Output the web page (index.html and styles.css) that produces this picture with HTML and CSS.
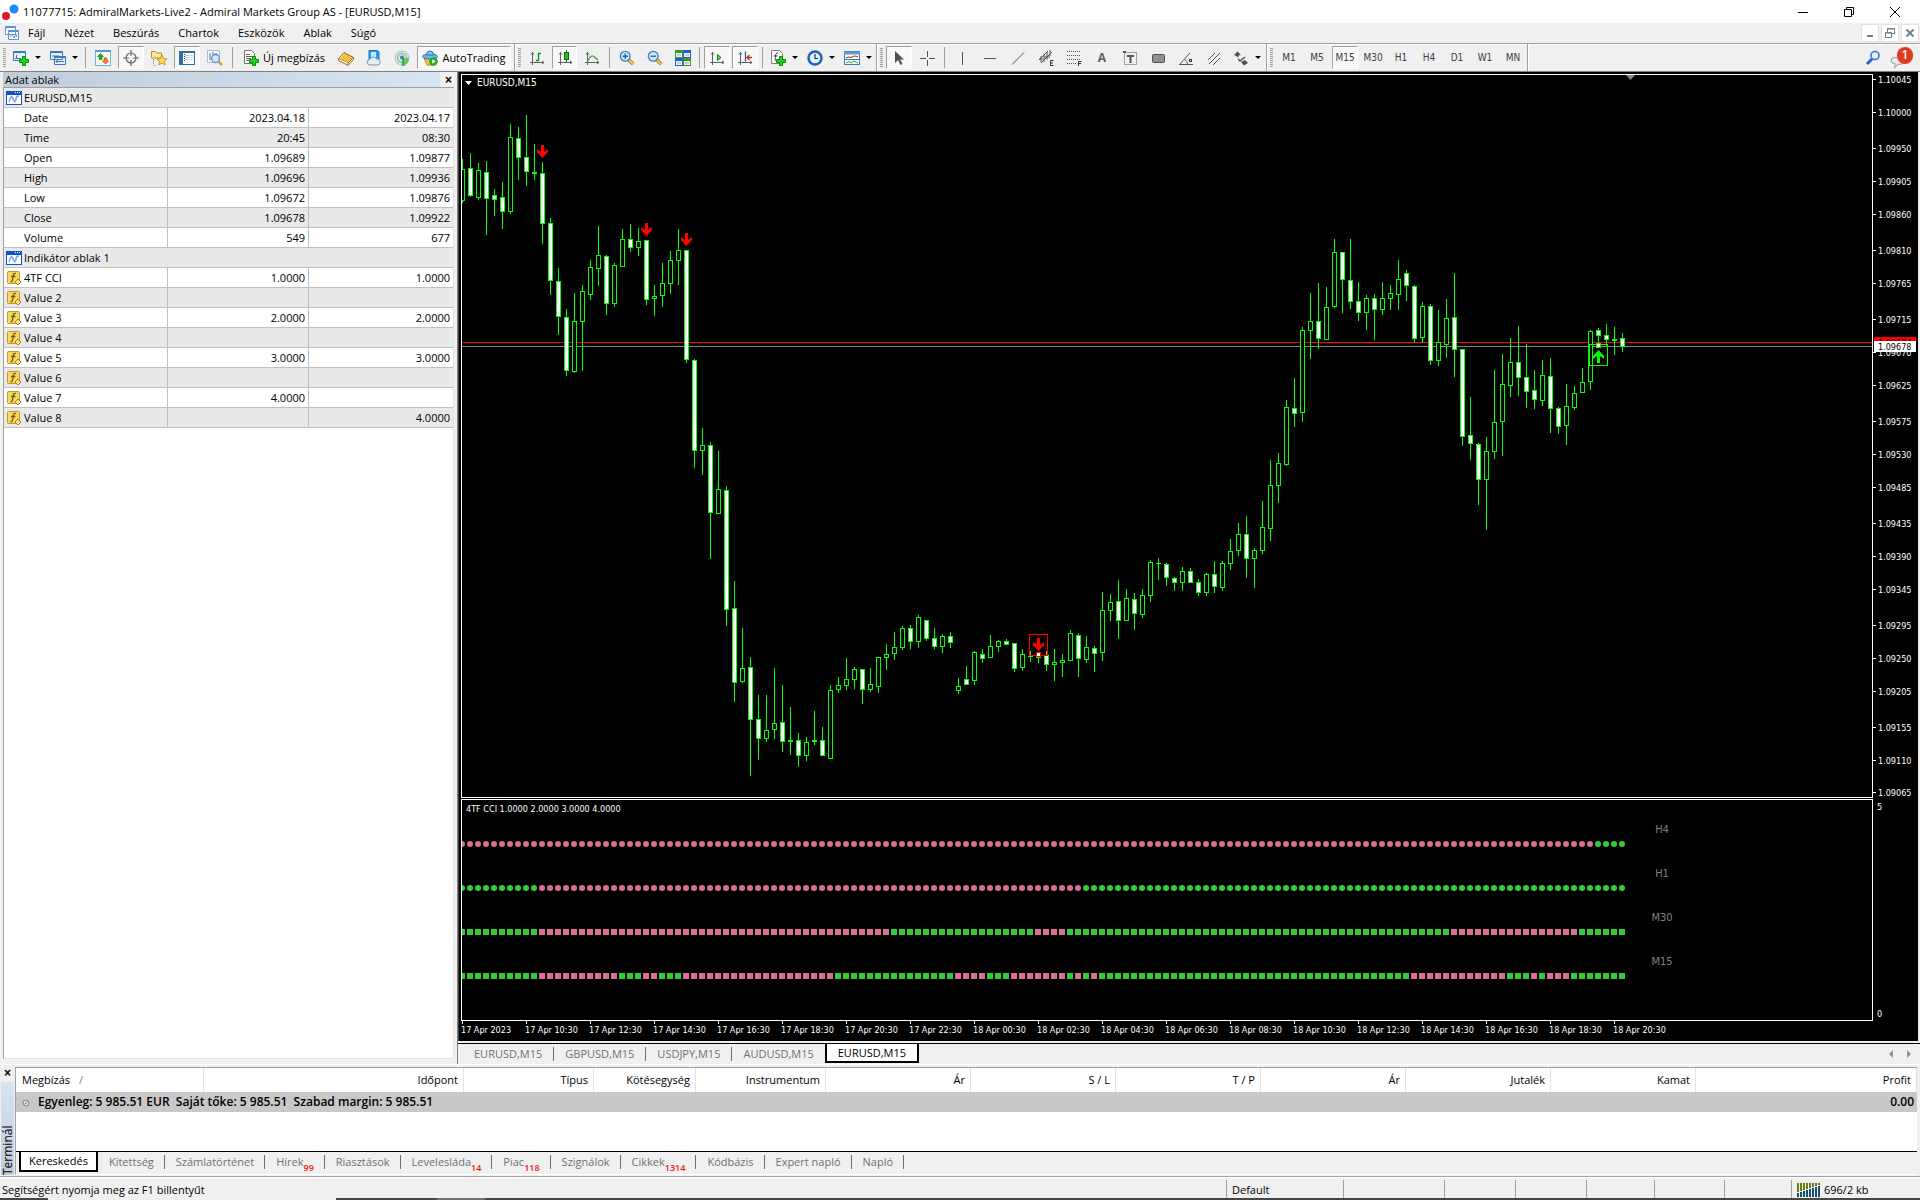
FILE: index.html
```html
<!DOCTYPE html>
<html lang="hu">
<head>
<meta charset="utf-8">
<title>11077715: AdmiralMarkets-Live2 - Admiral Markets Group AS - [EURUSD,M15]</title>
<link rel="stylesheet" href="styles.css">
</head>
<body>
<svg class="defs" aria-hidden="true">
  <symbol id="plus" viewBox="0 0 10 10"><path d="M3.500 .5h3v3h3v3h-3v3h-3v-3h-3v-3h3z" fill="#1fd51f" stroke="#0a8a0a"/></symbol>
  <symbol id="win" viewBox="0 0 16 16"><rect x=".5" y="1.500" width="15" height="13" fill="#fff" stroke="#1450d2"/><rect y="1" width="16" height="4" fill="#1450d2"/><path d="M9 2.500h1m1 0h1m1 0h1" stroke="#fff"/><path d="M3 12c2-7 3-6 4-3s2 4 3 0 1-3 3-3" fill="none" stroke="#7f9fe6" stroke-width="1.500"/></symbol>
  <symbol id="fx" viewBox="0 0 16 16"><rect x="1.500" y="1.500" width="12" height="12" rx="1" fill="#f3d863" stroke="#c79a1c"/><path d="M10 3.500c-2-.7-2.500.5-2.800 2.500L6.500 10c-.3 1.500-1 2-2 1.500M5 6.500h4.500" fill="none" stroke="#7a5a10" stroke-width="1.300"/><path d="M12 9l3 3-3 3-3-3z" fill="#f9e48a" stroke="#a87c10"/></symbol>
  <symbol id="axes" viewBox="0 0 16 16"><path d="M3.500 2v13M1 12.500h14M2 4.500l1.500-2 1.500 2M13 11l2 1.500-2 1.500" fill="none" stroke="#606060"/></symbol>
  <symbol id="lens" viewBox="0 0 18 18"><path d="M11 11l5 5" stroke="#a88020" stroke-width="4"/><path d="M11 11l5 5" stroke="#f4cf52" stroke-width="2"/><circle cx="7" cy="7" r="5.500" fill="#cfe8fb" stroke="#3a7fc0" stroke-width="1.500"/></symbol>
</svg>

<header class="titlebar">
  <svg class="logo" viewBox="0 0 20 20"><circle cx="14" cy="7" r="4.500" fill="#1e88ff"/><circle cx="6" cy="14" r="4" fill="#e01826"/></svg>
  <h1>11077715: AdmiralMarkets-Live2 - Admiral Markets Group AS - [EURUSD,M15]</h1>
  <div class="wincontrols">
    <button aria-label="Kis méret"><svg viewBox="0 0 12 12"><path d="M1 6.500h10" stroke="#000"/></svg></button>
    <button aria-label="Előző méret"><svg viewBox="0 0 12 12"><path d="M1.500 3.500h7v7h-7zM3.500 3v-1.500h7v7H9" fill="none" stroke="#000"/></svg></button>
    <button aria-label="Bezárás"><svg viewBox="0 0 12 12"><path d="M1 1l10 10M11 1L1 11" stroke="#000"/></svg></button>
  </div>
</header>

<nav class="menubar">
  <svg class="ico" viewBox="0 0 16 16"><path d="M1.500 1.500h10v8h-10zM4.500 5.500h10v9h-10z" fill="#fff" stroke="#5a94d8"/><path d="M1 2.500h11M4 6.500h11M6 12l2-3 2 4 2-4 1 3" fill="none" stroke="#5a94d8"/></svg>
  <button>Fájl</button><button>Nézet</button><button>Beszúrás</button><button>Chartok</button><button>Eszközök</button><button>Ablak</button><button>Súgó</button>
  <div class="mdi">
    <button aria-label="Kis méret"><svg viewBox="0 0 12 12"><path d="M3 9h6" stroke="#6d7f92" stroke-width="2"/></svg></button>
    <button aria-label="Előző méret"><svg viewBox="0 0 12 12"><path d="M1.500 5.500h6v5h-6zM3.500 5V1.500h7v5H8M1 6h7M3 2h8" fill="none" stroke="#6d7f92"/></svg></button>
    <button aria-label="Bezárás"><svg viewBox="0 0 12 12"><path d="M2.500 2.500l7 7m0-7l-7 7" stroke="#6d7f92" stroke-width="2"/></svg></button>
  </div>
</nav>

<div class="toolbars">
  <div class="toolbar bar-main"><i class="grip"></i>
    <button class="drop" aria-label="Új chart"><svg class="ico" viewBox="0 0 16 16"><path d="M.5 1.500h12v9H.5z" fill="#e6f1fc" stroke="#3a78b8"/><path d="M0 2.500h13M3.500 5v4M2 8.500h6" stroke="#3a78b8"/><use href="#plus" x="6" y="6" width="10" height="10"/></svg><i class="caret"></i></button>
    <button class="drop" aria-label="Profilok"><svg class="ico" viewBox="0 0 16 16"><path d="M.5 1.500h12v8H.5zM4.500 6.500h11v8h-11z" fill="#e6f1fc" stroke="#3a78b8"/><path d="M0 2.500h13M4 7.500h12M2 6h7M6 11.500h8M7.500 10l-1.500 1.500 1.500 1.500" fill="none" stroke="#3a78b8"/></svg><i class="caret"></i></button>
    <i class="sep"></i>
    <button aria-label="Piacfigyelő"><svg class="ico" viewBox="0 0 16 16"><rect x=".5" y=".5" width="15" height="15" fill="#fdfdf6" stroke="#7ab0dc"/><path d="M0 1h16" stroke="#5a9ad0" stroke-width="2"/><path d="M5.500 3.500l3 3H7v3H4v-3H2.500z" fill="#25b325" stroke="#087008" stroke-width=".6"/><path d="M10.500 14l3-3H12V8H9v3H7.500z" fill="#f08a3a" stroke="#a03000" stroke-width=".6"/></svg></button>
    <button class="on" aria-label="Adat ablak"><svg class="ico" viewBox="0 0 16 16"><circle cx="8" cy="8" r="5" fill="none" stroke="#666" stroke-width="1.200"/><path d="M8 0v6M8 10v6M0 8h6M10 8h6" stroke="#666" stroke-width="1.200"/></svg></button>
    <button aria-label="Navigátor"><svg class="ico" viewBox="0 0 16 16"><path d="M.5 1.500h4l1 1.500h5v5H.5z" fill="#fbe79a" stroke="#c09028"/><path d="M2.500 9v6.500h3" fill="none" stroke="#888" stroke-dasharray="1 1"/><path d="M11 5l1.600 3.500 3.400.4-2.500 2.500.7 3.600-3.200-1.800L7.800 15l.7-3.600L6 8.900l3.400-.4z" fill="#fcd94e" stroke="#b8860b" stroke-width=".8"/></svg></button>
    <button class="on" aria-label="Terminál"><svg class="ico" viewBox="0 0 16 16"><rect x=".5" y="1.500" width="15" height="13" fill="#fff" stroke="#2d6da8"/><path d="M0 2.500h16" stroke="#2d6da8"/><path d="M2.500 2v12" stroke="#2d6da8" stroke-width="3"/><path d="M6 5.500h8M6 7.500h8M6 9.500h8" stroke="#bcd4ec"/><path d="M5.500 4v8" stroke="#404040" stroke-dasharray="1 1"/></svg></button>
    <button aria-label="Stratégia teszter"><svg class="ico" viewBox="0 0 16 16"><rect x=".5" y=".5" width="12" height="12" fill="#f7fbff" stroke="#a8c0d4"/><path d="M3 3v7M6 2v6M9 3v5" stroke="#5a6a7a"/><path d="M11.500 11.500l3.500 3.500" stroke="#d8a030" stroke-width="2.500"/><circle cx="8.500" cy="8.500" r="4" fill="#cfe8fb" stroke="#5a94c8" stroke-width="1.300"/></svg></button>
    <i class="sep"></i>
    <button class="wide"><svg class="ico" viewBox="0 0 16 16"><path d="M1.500.5h7l3 3v10h-10z" fill="#fff" stroke="#707070"/><path d="M3 4.500h4M3 6.500h7M3 8.500h5M3 10.500h3" stroke="#606060"/><use href="#plus" x="6" y="6" width="10" height="10"/></svg>Új megbízás</button>
    <button aria-label="MetaEditor"><svg class="ico" viewBox="0 0 16 16"><path d="M.5 9L6 2.500l9.500 5L10 13z" fill="#f0bf48" stroke="#a06c10"/><path d="M.5 9v1.500l9.500 5V13M10 15.500l5.500-6v-2" fill="#fff6d8" stroke="#a06c10"/><path d="M2 8.500L6 4" stroke="#fdf0b0"/></svg></button>
    <button aria-label="Felhő"><svg class="ico" viewBox="0 0 16 16"><path d="M3 .5h8l2 1.500v9H3z" fill="#2b9df4" stroke="#1270c0"/><path d="M5 2h5v6H5z" fill="#c6e6ff"/><path d="M3.500 15a2.800 2.800 0 010-5.500 4 4 0 017-.5 3 3 0 011.500 6z" fill="#e4ecf4" stroke="#7a94b0"/></svg></button>
    <button aria-label="Jelek"><svg class="ico" viewBox="0 0 16 16"><circle cx="8" cy="8" r="7" fill="#d4e6dc" stroke="#a4c4b0"/><circle cx="8" cy="8" r="4.500" fill="none" stroke="#78a8b8"/><circle cx="8" cy="7.500" r="2" fill="#3c8cb4"/><path d="M9 8v8c5-1 6-6 6-8" fill="#6cc070"/><path d="M9 7.500V16" stroke="#28a028" stroke-width="1.500"/></svg></button>
    <button class="wide on"><svg class="ico" viewBox="0 0 16 16"><path d="M2 8h12l-3 7H5z" fill="#f3c63c" stroke="#b08a10"/><ellipse cx="8" cy="6.500" rx="7.500" ry="2.500" fill="#6db6ea" stroke="#2d74ac"/><path d="M4.500 5a3.500 4 0 017 0z" fill="#8ccaf4" stroke="#2d74ac"/><circle cx="11.500" cy="11.500" r="4.300" fill="#1fae1f"/><path d="M10.200 9.200l3.600 2.300-3.600 2.300z" fill="#fff"/></svg>AutoTrading</button>
  </div>
  <div class="toolbar bar-chart"><i class="grip"></i>
    <button aria-label="Bar chart"><svg class="ico" viewBox="0 0 16 16"><use href="#axes"/><path d="M9.500 3v8M9.500 3.500H12M7 10.500h2.500" stroke="#109010" stroke-width="1.300"/></svg></button>
    <button class="on" aria-label="Gyertyák"><svg class="ico" viewBox="0 0 16 16"><use href="#axes"/><path d="M9.500 0v12" stroke="#087008"/><rect x="7.500" y="2.500" width="4" height="7" fill="#22c022" stroke="#087008"/></svg></button>
    <button aria-label="Vonal chart"><svg class="ico" viewBox="0 0 16 16"><use href="#axes"/><path d="M4 11c3-7 5-6 10-1" fill="none" stroke="#58a858" stroke-width="1.300"/></svg></button>
    <i class="sep"></i>
    <button aria-label="Nagyítás"><svg class="ico" viewBox="0 0 18 18"><use href="#lens"/><path d="M4 7h6M7 4v6" stroke="#2060a0" stroke-width="1.500"/></svg></button>
    <button aria-label="Kicsinyítés"><svg class="ico" viewBox="0 0 18 18"><use href="#lens"/><path d="M4 7h6" stroke="#2060a0" stroke-width="1.500"/></svg></button>
    <button aria-label="Ablakok elrendezése"><svg class="ico" viewBox="0 0 16 16"><path d="M0 0h8v8H0zM8 8h8v8H8z" fill="#3c9a20"/><path d="M8 0h8v8H8zM0 8h8v8H0z" fill="#2a5cd0"/><path d="M1 3h6v4H1zM9 3h6v4H9zM1 11h6v4H1zM9 11h6v4H9z" fill="#eef4ff"/><path d="M2 5h4M10 5h4M2 13h4M10 13h4" stroke="#9ab"/></svg></button>
    <i class="sep"></i>
    <button class="on" aria-label="Automatikus görgetés"><svg class="ico" viewBox="0 0 16 16"><use href="#axes"/><path d="M8.500 4.500L12 7.500l-3.500 3z" fill="#50d050" stroke="#109010"/></svg></button>
    <button class="on" aria-label="Chart eltolás"><svg class="ico" viewBox="0 0 16 16"><use href="#axes"/><path d="M8.500 1.500v10" stroke="#2060a0" stroke-width="1.300"/><path d="M10 7.500h5M12.500 5L10 7.500l2.500 2.500" fill="none" stroke="#c03000" stroke-width="1.300"/></svg></button>
    <i class="sep"></i>
    <button class="drop" aria-label="Indikátorok"><svg class="ico" viewBox="0 0 16 16"><path d="M1.500.5h8l3 3v10h-11z" fill="#fff" stroke="#808080"/><path d="M8 3c-3-.5-2 3-3 8M3.500 6h4" fill="none" stroke="#404040"/><use href="#plus" x="6" y="6" width="10" height="10"/></svg><i class="caret"></i></button>
    <button class="drop" aria-label="Időtávok"><svg class="ico" viewBox="0 0 16 16"><circle cx="8" cy="8" r="6.500" fill="#dff0ff" stroke="#1f66b4" stroke-width="2.500"/><path d="M8 4v4.500h3" fill="none" stroke="#333" stroke-width="1.200"/></svg><i class="caret"></i></button>
    <button class="drop" aria-label="Sablonok"><svg class="ico" viewBox="0 0 16 16"><rect x=".5" y="1.500" width="15" height="13" fill="#fff" stroke="#3a78b8"/><path d="M0 3h16" stroke="#5a9ad8" stroke-width="3"/><path d="M2 8l3-1 2 .5 3-1.500 4 .5" fill="none" stroke="#a02020"/><path d="M1 9.500h14" stroke="#3a78b8"/><path d="M2 13l3-1.500 2 1.500 3-2 4 2" fill="none" stroke="#20a020"/></svg><i class="caret"></i></button>
  </div>
  <div class="toolbar bar-draw"><i class="grip"></i>
    <button class="on" aria-label="Kurzor"><svg class="ico" viewBox="0 0 16 16"><path d="M4 1v12l3-3 2.500 5 2-1-2.500-4.500h4z" fill="#505050"/></svg></button>
    <button aria-label="Célkereszt"><svg class="ico" viewBox="0 0 16 16"><path d="M8.500 1v6M8.500 10v6M1 8.500h6M10 8.500h6" stroke="#555"/></svg></button>
    <i class="sep"></i>
    <button aria-label="Függőleges vonal"><svg class="ico" viewBox="0 0 16 16"><path d="M8.500 2v13" stroke="#555"/></svg></button>
    <button aria-label="Vízszintes vonal"><svg class="ico" viewBox="0 0 16 16"><path d="M2 8.500h12" stroke="#555"/></svg></button>
    <button aria-label="Trendvonal"><svg class="ico" viewBox="0 0 16 16"><path d="M2 14.500L14 2.500" stroke="#555"/></svg></button>
    <button aria-label="Csatorna"><svg class="ico" viewBox="0 0 16 16"><path d="M1 10L10 1M3 13L14 2M3 6v6M6 4v8M9 2v8M12 0v6M1 9h4M6 7h6" stroke="#555" fill="none"/><path d="M15.500 10.500h-3v5h3M12.500 13h2.500" fill="none" stroke="#333"/></svg></button>
    <button aria-label="Fibonacci"><svg class="ico" viewBox="0 0 16 16"><path d="M1 1.500h14M1 5.500h14M1 9.500h14M1 13.500h9" stroke="#555" stroke-dasharray="1 1"/><path d="M15.500 11.500h-3V16M12.500 13.500h2.500" fill="none" stroke="#333"/></svg></button>
    <button class="glyph" aria-label="Szöveg">A</button>
    <button aria-label="Szövegcímke"><svg class="ico" viewBox="0 0 16 16"><rect x="2.500" y="2.500" width="12" height="12" fill="none" stroke="#555" stroke-dasharray="1 1"/><path d="M1 1h3v2H1z" fill="#555"/><path d="M5 6h7M8.500 6v7" stroke="#555" stroke-width="2"/></svg></button>
    <button aria-label="Téglalap"><svg class="ico" viewBox="0 0 16 16"><rect x="2.500" y="4.500" width="12" height="8" rx="1" fill="#909090" stroke="#505050"/></svg></button>
    <button aria-label="Szög"><svg class="ico" viewBox="0 0 16 16"><path d="M1 14.500h14M2 14L12 3M6.500 9.500q3 1.500 3 5" fill="none" stroke="#555"/><rect x="11.500" y="9.500" width="2" height="2" fill="none" stroke="#333"/></svg></button>
    <button aria-label="Vonalak"><svg class="ico" viewBox="0 0 16 16"><path d="M2 10L9 3M3 14L14 3M7 15l7-7" stroke="#555"/></svg></button>
    <button class="drop" aria-label="Nyilak"><svg class="ico" viewBox="0 0 16 16"><path d="M4.500 1.500L8 5 5.500 5.500v2L3 6 1 5zM12 10l3 3-4 2.500L8 12z" fill="#505050"/><path d="M5 9l2 2 5-4" fill="none" stroke="#505050" stroke-width="1.500"/></svg><i class="caret"></i></button>
  </div>
  <div class="toolbar bar-time"><i class="grip"></i>
    <button>M1</button><button>M5</button><button class="on">M15</button><button>M30</button><button>H1</button><button>H4</button><button>D1</button><button>W1</button><button>MN</button>
  </div>
  <div class="tools-right">
    <button aria-label="Keresés"><svg class="ico" viewBox="0 0 16 16"><path d="M7 9l-5 5" stroke="#2a5fd8" stroke-width="3"/><circle cx="10" cy="5.500" r="4" fill="#eaf4ff" stroke="#3a74e0" stroke-width="1.600"/></svg></button>
    <button class="chat" aria-label="Üzenetek"><svg viewBox="0 0 16 16"><path d="M2 7c0-3 12-3 12 0s-3 4-6 4l-3 3 .5-3.500C3 10 2 9 2 7z" fill="#ececec" stroke="#a8a8a8"/></svg><span class="badge">1</span></button>
  </div>
</div>

<main class="workspace">
  <aside class="datawin">
    <div class="caption"><h2>Adat ablak</h2><button class="x" aria-label="Bezárás">×</button></div>
    <div class="databody">
      <table class="data">
        <colgroup><col class="c-name"><col class="c-a"><col></colgroup>
        <tbody>
          <tr class="alt"><th colspan="3"><svg class="ico"><use href="#win"/></svg>EURUSD,M15</th></tr>
          <tr><th>Date</th><td>2023.04.18</td><td>2023.04.17</td></tr>
          <tr class="alt"><th>Time</th><td>20:45</td><td>08:30</td></tr>
          <tr><th>Open</th><td>1.09689</td><td>1.09877</td></tr>
          <tr class="alt"><th>High</th><td>1.09696</td><td>1.09936</td></tr>
          <tr><th>Low</th><td>1.09672</td><td>1.09876</td></tr>
          <tr class="alt"><th>Close</th><td>1.09678</td><td>1.09922</td></tr>
          <tr><th>Volume</th><td>549</td><td>677</td></tr>
          <tr class="alt"><th colspan="3"><svg class="ico"><use href="#win"/></svg>Indikátor ablak 1</th></tr>
          <tr><th><svg class="ico"><use href="#fx"/></svg>4TF CCI</th><td>1.0000</td><td>1.0000</td></tr>
          <tr class="alt"><th><svg class="ico"><use href="#fx"/></svg>Value 2</th><td></td><td></td></tr>
          <tr><th><svg class="ico"><use href="#fx"/></svg>Value 3</th><td>2.0000</td><td>2.0000</td></tr>
          <tr class="alt"><th><svg class="ico"><use href="#fx"/></svg>Value 4</th><td></td><td></td></tr>
          <tr><th><svg class="ico"><use href="#fx"/></svg>Value 5</th><td>3.0000</td><td>3.0000</td></tr>
          <tr class="alt"><th><svg class="ico"><use href="#fx"/></svg>Value 6</th><td></td><td></td></tr>
          <tr><th><svg class="ico"><use href="#fx"/></svg>Value 7</th><td>4.0000</td><td></td></tr>
          <tr class="alt"><th><svg class="ico"><use href="#fx"/></svg>Value 8</th><td></td><td>4.0000</td></tr>
        </tbody>
      </table>
    </div>
  </aside>

  <section class="charts">
    <div class="chartwin">
      <div class="pane"><svg id="price"></svg></div>
      <svg class="scale" id="price-scale"></svg>
      <div class="pane"><svg id="cci"></svg></div>
      <svg class="scale" id="cci-scale"></svg>
      <svg class="timescale" id="time-scale"></svg>
    </div>
    <div class="charttabs">
      <button>EURUSD,M15</button><button>GBPUSD,M15</button><button>USDJPY,M15</button><button>AUDUSD,M15</button><button class="active">EURUSD,M15</button>
      <div class="scroll"><button aria-label="Balra"><svg viewBox="0 0 6 8"><path d="M5 0v8L1 4z" fill="#909090"/></svg></button><button aria-label="Jobbra"><svg viewBox="0 0 6 8"><path d="M1 0v8l4-4z" fill="#909090"/></svg></button></div>
    </div>
  </section>
</main>

<section class="terminal">
  <div class="side"><button class="x" aria-label="Bezárás">×</button><h2>Terminál</h2></div>
  <div class="termbody">
    <div class="orders">
      <table>
        <colgroup><col class="w188"><col class="w260"><col class="w130"><col class="w102"><col class="w130"><col class="w145"><col class="w145"><col class="w145"><col class="w145"><col class="w145"><col class="w145"><col></colgroup>
        <thead><tr><th class="first">Megbízás <span class="sort">/</span></th><th>Időpont</th><th>Típus</th><th>Kötésegység</th><th>Instrumentum</th><th>Ár</th><th>S / L</th><th>T / P</th><th>Ár</th><th>Jutalék</th><th>Kamat</th><th>Profit</th></tr></thead>
        <tbody><tr><td colspan="11" class="first"><svg class="dot" viewBox="0 0 8 8"><circle cx="4" cy="4" r="3" fill="#d8d8d8" stroke="#888"/><path d="M2.500 5.500l3-3" stroke="#888"/></svg>Egyenleg: 5 985.51 EUR&nbsp; Saját tőke: 5 985.51&nbsp; Szabad margin: 5 985.51</td><td>0.00</td></tr></tbody>
      </table>
    </div>
    <div class="termtabs">
      <button class="active">Kereskedés</button><button>Kitettség</button><button>Számlatörténet</button><button>Hírek<sub>99</sub></button><button>Riasztások</button><button>Levelesláda<sub>14</sub></button><button>Piac<sub>118</sub></button><button>Szignálok</button><button>Cikkek<sub>1314</sub></button><button>Kódbázis</button><button>Expert napló</button><button>Napló</button>
    </div>
  </div>
</section>

<footer class="status">
  <span class="hint">Segítségért nyomja meg az F1 billentyűt</span>
  <span class="cell s117">Default</span><span class="cell s101"></span><span class="cell s71"></span><span class="cell s71"></span><span class="cell s68"></span><span class="cell s70"></span><span class="cell s67"></span>
  <span class="cell traffic"><svg viewBox="0 0 24 14"><path d="M1 0v9M4 0v8M7 0v7M10 0v6M13 0v5M16 0v4M19 0v3M22 0v2" stroke="#6a7d10" stroke-width="2"/><path d="M1 10v4M4 9v5M7 8v6M10 7v7M13 6v8M16 5v9M19 4v10M22 3v11" stroke="#14506e" stroke-width="2"/></svg>696/2 kb</span>
</footer>
<div class="desk"><i></i><i></i></div>
<script src="chart.js"></script>
</body>
</html>
```
FILE: styles.css
```css
* { box-sizing: border-box; }
body { margin: 0; height: 100vh; display: flex; flex-direction: column; overflow: hidden; background: #f0f0f0; color: #000; font: 11px/16px "Open Sans", sans-serif; }
h1, h2 { margin: 0; font: inherit; }
button { border: 0; margin: 0; padding: 0; background: none; font: inherit; color: inherit; display: flex; align-items: center; justify-content: center; white-space: nowrap; }
svg { display: block; flex: none; }
.defs { position: absolute; width: 0; height: 0; }
.ico { width: 16px; height: 16px; }

.titlebar { height: 23px; flex: none; display: flex; align-items: center; background: #fff; }
.logo { width: 20px; height: 20px; margin-right: 3px; }
.wincontrols { margin-left: auto; display: flex; padding-right: 2px; }
.wincontrols button { width: 46px; height: 20px; }
.wincontrols svg { width: 12px; height: 12px; }

.menubar { height: 20px; flex: none; display: flex; align-items: center; gap: 19px; padding-left: 4px; background: #f0f0f0; }
.menubar .ico { margin-right: -11px; }
.mdi { margin-left: auto; display: flex; gap: 2px; padding-right: 1px; }
.mdi button { width: 18px; height: 18px; background: #fff; border: 1px solid #e2e2e2; }
.mdi svg { width: 12px; height: 12px; }

.toolbars { height: 29px; flex: none; display: flex; border-top: 1px solid #a0a0a0; border-bottom: 1px solid #808080; box-shadow: inset 0 1px #fff; }
.toolbar { display: flex; align-items: center; flex: none; padding-left: 3px; border-right: 1px solid #a0a0a0; box-shadow: 1px 0 #fff; }
.bar-main { width: 515px; }
.bar-chart { width: 362px; }
.bar-draw { width: 390px; }
.bar-time { width: 261px; font: 10px/12px "DejaVu Sans Condensed", "DejaVu Sans", sans-serif; color: #404040; }
.grip { width: 3px; height: 20px; margin-right: 2px; background: repeating-linear-gradient(#a0a0a0 0 1px, transparent 1px 2px); }
.sep { width: 1px; height: 21px; margin: 0 3px; background: #a0a0a0; }
.toolbar button { width: 26px; height: 23px; margin: 0 1px; border: 1px solid transparent; }
.toolbar .on { background: #f8f8f8; border-color: #a0a0a0 #fff #fff #a0a0a0; }
.toolbar .drop { width: 35px; gap: 6px; }
.toolbar .wide { width: 94px; gap: 4px; }
.toolbar .glyph { font-weight: 700; font-size: 12px; color: #606060; }
.caret { border: 3px solid transparent; border-top-color: #000; border-bottom: 0; }
.tools-right { margin-left: auto; display: flex; align-items: center; gap: 8px; padding-right: 7px; }
.chat { position: relative; width: 24px; height: 24px; align-items: flex-end; justify-content: flex-start; }
.chat svg { width: 18px; height: 18px; }
.badge { position: absolute; top: 1px; right: 0; width: 16px; height: 17px; border-radius: 8px; background: #e23a1c; color: #fff; font-size: 12px; font-weight: 600; text-align: center; }

.workspace { flex: 1; min-height: 0; display: flex; }
.datawin { width: 457px; flex: none; display: flex; flex-direction: column; padding: 0 3px 5px; }
.caption { height: 15px; flex: none; display: flex; align-items: center; justify-content: space-between; padding: 0 2px; background: linear-gradient(90deg, #bfcddb, #d7e4f2) no-repeat 0 0 / calc(100% - 14px) 100%; }
.x { font: 700 12px/12px "Liberation Sans", sans-serif; }
.databody { flex: 1; background: #fff; border: 1px solid #a0a0a0; border-right-color: #e3e3e3; border-bottom-color: #e3e3e3; }
.data { width: 100%; table-layout: fixed; border-spacing: 0; }
.c-name { width: 164px; }
.c-a { width: 141px; }
.data th, .data td { height: 20px; padding: 0 3px 0 0; border-right: 1px solid #c0c0c0; border-bottom: 1px solid #c0c0c0; text-align: right; font-weight: 400; line-height: 16px; }
.data tr > :last-child { border-right: 0; }
.data th { text-align: left; padding-left: 20px; }
.data .ico { float: left; margin-left: -18px; }
.alt { background: #e9e9e9; }

.charts { flex: 1; min-width: 0; display: flex; flex-direction: column; border-left: 1px solid #808080; }
.chartwin { flex: 1; min-height: 0; display: grid; grid-template: minmax(0, 1fr) 222px 20px / minmax(0, 1fr) 45px; padding: 2px 0 0 2px; margin: 0 2px 2px 1px; background: #000; box-shadow: -1px 0 #404040; }
.pane { border: 1px solid #fff; min-height: 0; }
.pane:first-child { margin-bottom: 1px; }
.pane svg, .scale, .timescale { width: 100%; height: 100%; }
.timescale { grid-column: 1 / -1; }
.chartwin text { font: 9px "DejaVu Sans Condensed", "DejaVu Sans", sans-serif; fill: #fff; }
.chartwin .symbol { font-size: 10px; }
.chartwin .tf { font-size: 11px; fill: #808080; }
.chartwin .ink { fill: #000; }
.charttabs { height: 21px; flex: none; display: flex; align-items: center; border-top: 1px solid #000; padding-left: 5px; color: #707070; }
.charttabs > button { height: 14px; padding: 0 11px; border-right: 1px solid #707070; }
.charttabs > button:nth-child(4) { border-right: 0; }
.charttabs > .active { height: 19px; align-self: flex-start; background: #fff; color: #000; border: 1px solid #000; border-width: 0 2px 2px; }
.scroll { margin-left: auto; display: flex; gap: 12px; padding-right: 8px; }
.scroll svg { width: 6px; height: 8px; }

.terminal { height: 113px; flex: none; display: flex; border-top: 1px solid #fff; padding: 2px 3px 1px 0; border-bottom: 1px solid #a0a0a0; }
.side { width: 15px; flex: none; display: flex; flex-direction: column; align-items: center; gap: 3px; }
.side h2 { flex: 1; width: 13px; writing-mode: vertical-rl; transform: rotate(180deg); font-size: 12px; line-height: 13px; background: linear-gradient(#bfcddb, #d7e4f2); }
.termbody { flex: 1; min-width: 0; display: flex; flex-direction: column; border-left: 1px solid #a0a0a0; border-top: 1px solid #a0a0a0; border-bottom: 1px solid #fff; }
.orders { flex: 1; background: #fff; border-bottom: 1px solid #000; }
.orders table { width: 100%; table-layout: fixed; border-spacing: 0; }
.w188 { width: 188px; } .w260 { width: 260px; } .w130 { width: 130px; } .w102 { width: 102px; } .w145 { width: 145px; }
.orders th { height: 24px; padding: 0 5px; border-right: 1px solid #e2e2e2; font-weight: 400; text-align: right; }
.orders td { height: 20px; padding: 0 3px; background: #c8c8c8; font-size: 12px; font-weight: 600; text-align: right; }
.orders .first { text-align: left; padding-left: 6px; }
.sort { color: #808080; margin-left: 6px; }
.dot { width: 8px; height: 8px; float: left; margin: 5px 8px 0 0; }
.termtabs { height: 22px; flex: none; display: flex; align-items: center; padding: 0 0 2px 3px; color: #707070; }
.termtabs button { height: 14px; padding: 0 10px 0 11px; border-right: 1px solid #707070; }
.termtabs .active { height: 20px; align-self: flex-start; background: #fff; color: #000; padding: 0 8px; border: 1px solid #000; border-width: 0 2px 2px; }
sub { margin-bottom: -3px; font-size: 9px; line-height: 9px; font-weight: 600; color: #f01020; align-self: flex-end; vertical-align: baseline; }

.status { height: 21px; flex: none; display: flex; align-items: flex-end; border-top: 1px solid #fff; padding-left: 2px; }
.hint { flex: 1; }
.cell { height: 18px; display: flex; align-items: center; padding: 2px 0 0 5px; border-left: 1px solid #a0a0a0; }
.s117 { width: 117px; } .s101 { width: 101px; } .s71 { width: 71px; } .s70 { width: 70px; } .s68 { width: 68px; } .s67 { width: 67px; }
.traffic { width: 129px; gap: 3px; }
.traffic svg { width: 24px; height: 14px; }
.desk { height: 2px; flex: none; display: flex; background: #464646; padding-left: 48px; gap: 101px; }
.desk i { width: 288px; background: #f0f0f0; }
.desk i + i { width: 48px; background: #707070; }
```
FILE: chart.js
```js
const NS = 'http://www.w3.org/2000/svg';
const STEP = 8;
const LIME = '#00ff00';

function add(parent, tag, attrs, text) {
  const el = document.createElementNS(NS, tag);
  for (const k in attrs) el.setAttribute(k, attrs[k]);
  if (text) el.textContent = text;
  parent.appendChild(el);
  return el;
}
function box(parent, x, y, width, height, fill) {
  return add(parent, 'rect', { x, y, width, height, fill });
}

// Each bar: wick top, body top, body bottom, wick bottom, and 1 for a falling bar.
const segments = [
  { y: 5, k: 2.24, bars: [
    [178,200,272,276,0],[164,198,260,262,1],[186,202,264,268,0],[181,206,266,347,1],[244,258,268,304,1],
    [228,262,295,334,1],[99,128,296,300,0],[105,130,174,223,1],[78,172,207,237,1],[143,206,210,223,1],
    [184,208,322,367,1],[309,320,451,482,1],[421,450,530,571,1],[513,531,651,664,1],[477,540,654,656,0],
    [459,473,542,652,0],[403,419,481,493,0],[327,392,423,461,0],[392,394,502,526,1],[410,414,501,508,0],
    [334,356,418,418,0],[323,356,376,385,1],[332,361,376,394,0],[358,358,492,503,1],[459,484,490,529,0],
    [410,455,484,508,0],[383,403,457,479,0],[334,381,405,459,0],[381,381,627,634,1],[625,627,832,869,1],
    [780,818,832,885,0],[811,818,971,1073,1],[831,916,973,973,0],[909,918,1187,1223,1],[1122,1183,1350,1393,1],
    [1228,1317,1348,1351,0],[1292,1315,1433,1559,1],[1378,1431,1477,1523,1],[1378,1456,1476,1483,0],[1317,1440,1456,1476,0],
    [1355,1438,1482,1505,1],[1404,1478,1482,1512,1],[1463,1478,1515,1539,1],[1472,1483,1514,1525,0],[1413,1478,1482,1490,1],
    [1449,1478,1515,1515,1]
  ] },
  { y: 505, k: 3, bars: [
    [315,330,537,537,0],[291,315,330,339,0],[234,297,318,330,0],[261,267,300,327,0],[267,267,330,372,1],
    [264,312,330,336,0],[231,231,321,339,0],[192,222,234,270,0],[156,201,222,240,0],[138,144,204,210,0],
    [135,144,186,207,1],[105,111,186,204,0],[120,120,177,183,1],[144,174,201,207,1],[162,168,201,219,0],
    [156,168,189,204,1],[294,318,333,342,0],[258,297,315,315,1],[213,216,303,315,0],[207,222,237,249,1],
    [165,198,234,234,0],[180,183,201,216,0],[177,183,195,195,1],[189,189,267,276,1],[207,222,264,273,0],
    [213,228,231,246,1],[216,222,234,249,1],[213,225,255,273,1],[207,246,255,303,0],[222,240,249,291,0],
    [150,159,243,243,0],[159,165,237,291,1],[168,201,240,249,0],[198,204,222,276,1],[36,90,219,243,0],
    [42,66,93,123,0],[0,63,123,177,1],[27,54,123,123,0],[39,57,102,150,1],[27,45,105,114,0]
  ] },
  { y: 250, k: 3, bars: [
    [705,711,812,831,0],[699,714,717,765,1],[714,717,759,783,1],[756,759,773,798,1],[726,738,773,798,0],
    [729,738,773,773,1],[762,771,803,813,1],[744,747,803,813,0],[708,747,785,804,1],[708,714,788,798,0]
  ] },
  { y: 145, k: 3, bars: [
    [957,993,1032,1050,0],[909,942,993,1008,0],[888,942,1017,1074,1],[984,990,1017,1104,0],[843,921,993,1002,0],
    [720,795,927,963,0],[699,729,798,849,0],[540,561,735,738,0],[474,564,582,621,1],[321,330,579,606,0],
    [219,303,333,417,0],[189,303,357,387,1],[201,261,360,360,0],[57,96,261,264,0],[96,96,180,279,1],
    [57,180,246,267,1],[186,243,279,303,1],[225,234,279,330,0],[222,234,270,360,1],[186,234,270,285,0],
    [195,219,237,270,0],[120,177,225,270,0],[150,159,198,243,1],[195,198,357,369,1],[246,258,354,369,0],
    [252,258,423,435,1],[270,366,423,438,0],[237,294,375,414,0],[159,291,390,471,1],[387,387,651,678,1],
    [531,645,672,720,1],[669,672,780,855,1],[651,693,780,930,0],[450,606,696,717,0],[402,492,606,708,0],
    [354,426,498,531,0],[318,426,474,528,1],[372,471,516,564,1],[450,510,540,567,1],[420,465,543,558,0],
    [414,468,567,639,1],[561,564,621,642,1],[492,558,618,675,0],[498,519,564,570,0],[444,486,519,519,0],
    [330,333,486,510,0],[324,330,348,384,1],[312,345,360,378,1],[321,357,363,405,1],[339,354,381,396,1]
  ] }
];

const price = document.getElementById('price');
box(price, 0, 267, '100%', 1, '#ff0000');
box(price, 0, 271, '100%', 1, '#778899');

let index = 0;
for (const s of segments) {
  for (const [high, top, bottom, low, down] of s.bars) {
    const [h, t, b, l] = [high, top, bottom, low].map(v => Math.round(s.y + v / s.k));
    const x = index * STEP;
    box(price, x, h, 1, Math.max(l - h, 1), LIME);
    box(price, x - 2, t, 5, Math.max(b - t, 1), LIME);
    if (b - t > 2) box(price, x - 1, t + 1, 3, b - t - 2, down ? '#fff' : '#000');
    index++;
  }
}

// Signal arrows; `flip` points the arrow up.
function arrow(x, y, color, flip) {
  add(price, 'path', {
    d: 'M-1.500 0h3v7l4-3v3L0 13l-5.500-6V4l4 3z', fill: color,
    transform: `translate(${x} ${y})` + (flip ? ' scale(1 -1)' : '')
  });
}
arrow(80.5, 70, '#ff0000');
arrow(184.5, 148, '#ff0000');
arrow(224.5, 158, '#ff0000');
arrow(576.5, 563, '#ff0000');
arrow(1136.5, 288, LIME, true);
function selection(x, y, ax, ay, color) {
  add(price, 'rect', { x: x + .5, y: y + .5, width: 18, height: 21, fill: 'none', stroke: color });
  add(price, 'rect', { x: ax + .5, y: ay + .5, width: 4, height: 4, fill: '#fff', stroke: color });
}
selection(567, 559, 574, 577, '#ff0000');
selection(1127, 269, 1134, 268, LIME);

add(price, 'path', { d: 'M3 6h7l-3.500 4z', fill: '#fff' });
add(price, 'text', { x: 15, y: 11, class: 'symbol' }, 'EURUSD,M15');
add(price, 'path', { d: 'M1164 0h9l-4.500 5z', fill: '#778899' });

const scale = document.getElementById('price-scale');
for (const p of [10045,10000,9950,9905,9860,9810,9765,9715,9670,9625,9575,9530,9485,9435,9390,9345,9295,9250,9205,9155,9110,9065]) {
  const y = Math.round(5 + (10045 - p) * .728);
  box(scale, 0, y, 3, 1, '#fff');
  add(scale, 'text', { x: 5, y: y + 4 }, '1.' + String(p).padStart(5, '0'));
}
box(scale, 1, 263, 42, 11, '#ff0000');
add(scale, 'text', { x: 5, y: 272, class: 'ink' }, '1.09684');
box(scale, 1, 267, 42, 11, '#fff');
add(scale, 'text', { x: 5, y: 276, class: 'ink' }, '1.09678');

// Trend rows: runs of equal colour, pink and lime green in turn.
const cci = document.getElementById('cci');
const rows = [
  { name: 'H4', y: 44, round: true, start: 'p', runs: [142, 4] },
  { name: 'H1', y: 88, round: true, start: 'g', runs: [10, 68, 68] },
  { name: 'M30', y: 132, start: 'g', runs: [10, 44, 18, 4, 48, 16, 6] },
  { name: 'M15', y: 176, start: 'g', runs: [10, 10, 3, 2, 3, 19, 15, 4, 3, 7, 1, 1, 1, 1, 39, 12, 3, 1, 1, 3, 7] }
];
for (const row of rows) {
  let green = row.start === 'g';
  let i = 0;
  for (const run of row.runs) {
    for (let n = 0; n < run; n++, i++) {
      const mark = box(cci, i * STEP - 3, row.y - 3, 6, 6, green ? '#32cd32' : '#db7093');
      if (row.round) mark.setAttribute('rx', 3);
    }
    green = !green;
  }
  add(cci, 'text', { x: 1200, y: row.y - 11, 'text-anchor': 'middle', class: 'tf' }, row.name);
}
add(cci, 'text', { x: 4, y: 12 }, '4TF CCI 1.0000 2.0000 3.0000 4.0000');

const cciScale = document.getElementById('cci-scale');
add(cciScale, 'text', { x: 4, y: 11 }, '5');
add(cciScale, 'text', { x: 4, y: 218 }, '0');

const time = document.getElementById('time-scale');
for (let k = 0; k < 19; k++) {
  const hour = (8 + 2 * k) % 24;
  const day = k < 8 ? 17 : 18;
  box(time, 1 + k * 64, 0, 1, 3, '#fff');
  add(time, 'text', { x: k * 64, y: 12 }, k ? `${day} Apr ${String(hour).padStart(2, '0')}:30` : '17 Apr 2023');
}
```
